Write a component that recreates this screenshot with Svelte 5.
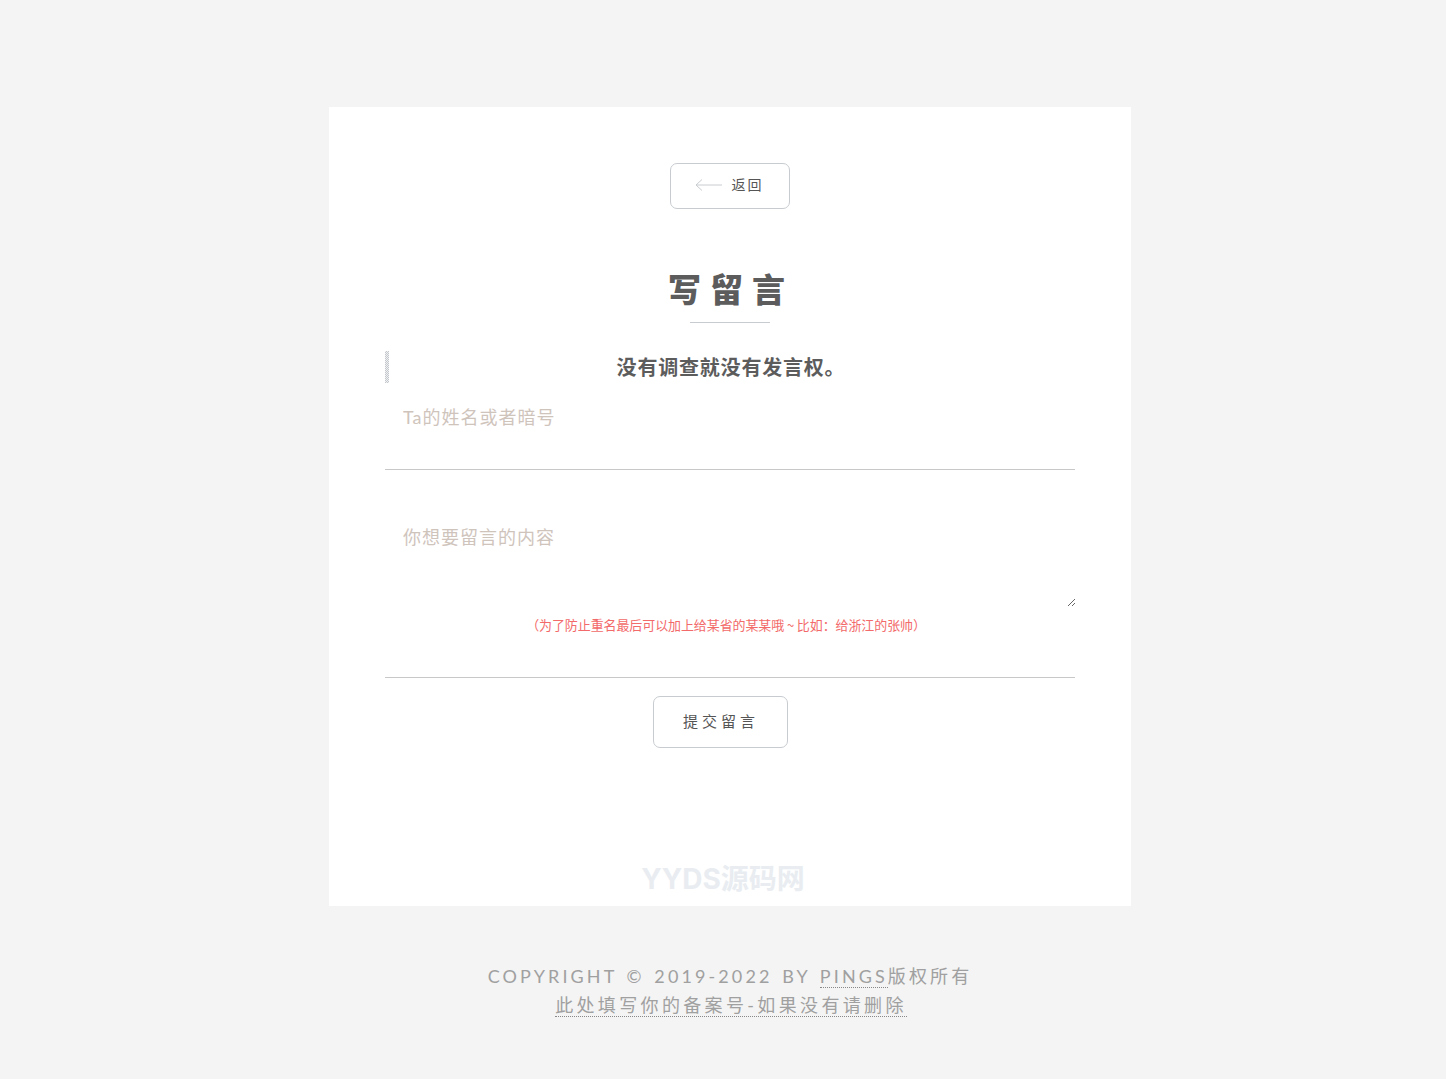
<script>
	const quote = '没有调查就没有发言权。';
	const hint = '（为了防止重名最后可以加上给某省的某某哦 ~ 比如：给浙江的张帅）';
</script>

<div class="page">
	<div class="card">
		<div class="back-row">
			<button class="back">
				<svg width="28" height="12" viewBox="0 0 28 12" fill="none" stroke="#c8ccd0" stroke-width="1">
					<path d="M27 6H1M7 0.5L1 6l6 5.5" />
				</svg>
				<span>返回</span>
			</button>
		</div>

		<h1>写留言</h1>
		<div class="rule"></div>

		<blockquote>
			<span class="bar"></span>
			<span class="quote-text">{quote}</span>
		</blockquote>

		<form on:submit|preventDefault>
			<div class="field name">
				<input type="text" placeholder="Ta的姓名或者暗号" />
			</div>
			<div class="field body">
				<textarea placeholder="你想要留言的内容"></textarea>
				<p class="hint">{hint}</p>
			</div>
			<div class="submit-row">
				<button class="submit" type="submit">提交留言</button>
			</div>
		</form>

		<div class="mark">YYDS源码网</div>
	</div>

	<footer>
		<div>COPYRIGHT © 2019-2022 BY <a href="#top">PINGS</a>版权所有</div>
		<div class="beian"><a href="#top">此处填写你的备案号-如果没有请删除</a></div>
	</footer>
</div>

<style>
	:global(body) {
		background: #f4f4f4;
		font-family: 'Lato', 'Noto Sans CJK SC', sans-serif;
	}

	.page {
		padding: 107px 0 48px 329px;
		width: 802px;
	}

	.card {
		background: #fff;
		box-sizing: border-box;
		height: 799px;
		padding: 56px 56px 0;
	}

	.back-row {
		display: flex;
		justify-content: center;
	}

	.back {
		display: flex;
		align-items: center;
		justify-content: center;
		gap: 9px;
		width: 120px;
		height: 46px;
		padding: 0 2px 2px 0;
		background: #fff;
		border: 1px solid #c8ccd0;
		border-radius: 7px;
		font: 14px 'Noto Sans CJK SC', sans-serif;
		letter-spacing: 2px;
		color: #555;
	}

	.back span {
		margin-bottom: 2px;
	}

	h1 {
		margin: 58px 0 0;
		height: 42px;
		text-align: center;
		font: 900 33px/42px 'Noto Sans CJK SC', sans-serif;
		letter-spacing: 9px;
		color: #5c5c5c;
		text-indent: 2px;
	}

	.rule {
		width: 80px;
		height: 1px;
		margin: 13px auto 0;
		background: #c8ccd0;
	}

	blockquote {
		display: flex;
		margin: 28px 0 0;
		height: 32px;
	}

	.bar {
		width: 4px;
		background: repeating-conic-gradient(#c4c8cc 0 25%, #f0f1f2 0 50%) 0 0 / 2px 2px;
	}

	.quote-text {
		flex: 1;
		padding-right: 2px;
		line-height: 32px;
		text-align: center;
		font-family: 'Noto Sans CJK SC', sans-serif;
		font-weight: bold;
		font-size: 20px;
		letter-spacing: 0.8px;
		color: #5c5c5c;
	}

	.field {
		border-bottom: 1px solid #c8c8c8;
	}

	.name {
		height: 86px;
	}

	input,
	textarea {
		display: block;
		box-sizing: border-box;
		width: calc(100% + 1px);
		border: 0;
		outline: 0;
		padding: 18px;
		background: transparent;
		font: 18px/24px 'Lato', 'Noto Sans CJK SC', sans-serif;
		letter-spacing: 1px;
		color: #555;
	}

	input {
		width: 100%;
		height: 68px;
	}

	input::placeholder,
	textarea::placeholder {
		color: #cfc4bc;
		opacity: 1;
	}

	.body {
		height: 208px;
		padding-top: 37px;
		box-sizing: border-box;
	}

	textarea {
		height: 100px;
		resize: vertical;
	}

	.hint {
		margin: 8px 0 0;
		padding-right: 8px;
		text-align: center;
		font: 13px/20px 'Noto Sans CJK SC', sans-serif;
		letter-spacing: -0.1px;
		color: #f36a6a;
	}

	.submit-row {
		display: flex;
		justify-content: center;
		padding: 18px 20px 0 0;
	}

	.submit {
		width: 135px;
		height: 52px;
		padding: 0 0 3px 2px;
		background: #fff;
		border: 1px solid #c8ccd0;
		border-radius: 7px;
		font: 15px 'Noto Sans CJK SC', sans-serif;
		letter-spacing: 4px;
		color: #555;
	}

	.mark {
		margin-top: 115px;
		padding-right: 14px;
		text-align: center;
		font: bold 28px/32px 'Inter', 'Noto Sans CJK SC', sans-serif;
		color: #e9edf1;
	}

	footer {
		margin-top: 56px;
		text-align: center;
		font-size: 18px;
		line-height: 29px;
		letter-spacing: 3.1px;
		word-spacing: 2px;
		color: #a0a0a0;
		white-space: nowrap;
	}

	.beian {
		padding-left: 2px;
		letter-spacing: 3.35px;
	}

	footer a {
		color: inherit;
		text-decoration: none;
		border-bottom: 1px dotted #888;
	}
</style>
